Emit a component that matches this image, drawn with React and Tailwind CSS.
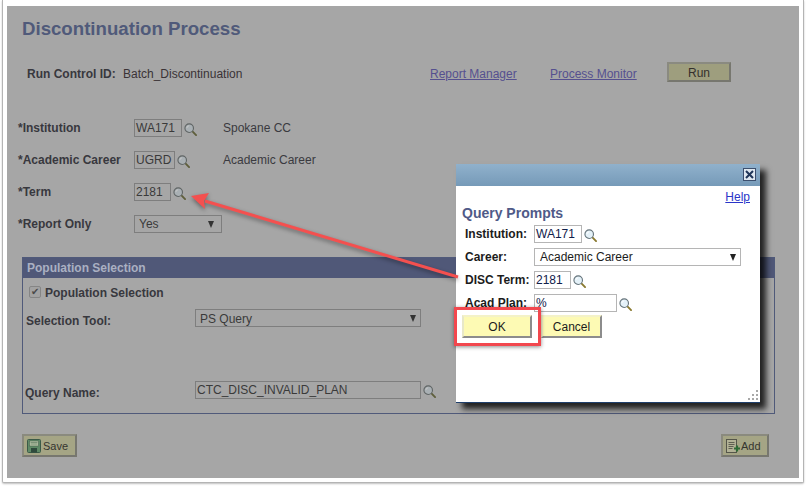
const font = { fontFamily: '"Liberation Sans", Arial, sans-serif' }

function Lens({ dim }) {
  return (
    <svg width="13" height="13" viewBox="0 0 14 14" className="mt-[3px] shrink-0">
      <path d="M8.8 8.8 L13 13" stroke={dim ? '#5f5f3c' : '#8a7a30'} strokeWidth="2" strokeLinecap="round" />
      <circle cx="5.6" cy="5.6" r="4.6" fill={dim ? '#a9b0b4' : '#e4f1f8'} stroke={dim ? '#5f6464' : '#64737a'} strokeWidth="1.2" />
      <path d="M3 5.5 A2.8 2.8 0 0 1 5.5 3" fill="none" stroke={dim ? '#c8c8c8' : '#ffffff'} strokeWidth="1" />
    </svg>
  )
}

function Field({ value, width, dim }) {
  return (
    <div className={`flex h-[18px] items-center border pl-[1px] text-[12px] shrink-0 ${dim ? 'border-[#7e7e7e] text-[#3a3a3a]' : 'border-[#b5b5b5] bg-white text-[#10204a]'}`} style={{ width }}>
      {value}
    </div>
  )
}

function FormRow({ label, children }) {
  return (
    <div className="flex h-[18px] items-center">
      <span className="w-[116px] text-[12px] font-bold text-[#38383e]">{label}</span>
      {children}
    </div>
  )
}

function PromptRow({ label, children, className }) {
  return (
    <div className={`flex h-[18px] items-center ${className}`}>
      <span className="w-[69px] text-[12px] font-bold text-[#1c1c1c]">{label}</span>
      {children}
    </div>
  )
}

function SaveIcon() {
  return (
    <svg width="14" height="14" viewBox="0 0 14 14" className="shrink-0">
      <rect x="0.5" y="0.5" width="13" height="13" rx="1" fill="#5f8a66" stroke="#3b5a48" />
      <rect x="2.5" y="2" width="9" height="5" fill="#b9c6a8" stroke="#49614f" strokeWidth="0.6" />
      <path d="M3.5 3.5h7M3.5 5h7" stroke="#5f7a60" strokeWidth="0.7" />
      <rect x="4" y="9" width="6" height="4.5" fill="#2f4a3c" />
    </svg>
  )
}

function AddIcon() {
  return (
    <svg width="15" height="14" viewBox="0 0 15 14" className="shrink-0">
      <rect x="0.5" y="0.5" width="10" height="13" fill="#b2b296" stroke="#55564a" />
      <path d="M2.5 3.5h6M2.5 5.5h6M2.5 7.5h5M2.5 9.5h4" stroke="#55564a" strokeWidth="0.9" />
      <path d="M11 6.5v6M8 9.5h6" stroke="#2f6b36" strokeWidth="2.2" />
    </svg>
  )
}

export default function App() {
  return (
    <div className="relative h-[486px] w-[806px] overflow-hidden bg-white" style={font}>
      <div className="ml-[2px] h-[483px] w-[802px] rounded-b-[2px] border-x border-b border-[#b4b4b4] bg-white pl-[4px] pt-[6px] shadow-[0_1px_2px_rgba(0,0,0,0.25)]">
        <div className="flex h-[472px] w-[792px] flex-col bg-[#a6a6a6] pl-[15px] pt-[11px]">
          <h1 className="h-[24px] text-[18.65px] font-bold leading-[24px] text-[#505a7a]">Discontinuation Process</h1>

          <div className="ml-[5px] mt-[21px] flex h-[20px] items-center text-[12px] text-[#3a3336]">
            <span className="w-[96px] pt-[3px] font-bold text-[#38383e]">Run Control ID:</span>
            <span className="w-[307px] pt-[3px]">Batch_Discontinuation</span>
            <a className="w-[120px] pt-[3px] text-[#55508f] underline">Report Manager</a>
            <a className="w-[117px] pt-[3px] text-[#55508f] underline">Process Monitor</a>
            <button className="h-[20px] w-[64px] border-2 border-t-[#8a8a80] border-l-[#8a8a80] border-r-[#77776f] border-b-[#77776f] bg-[#9e9e7e] pb-[3px] text-[12px] text-[#35302c]">Run</button>
          </div>

          <div className="ml-[-4px] mt-[37px] flex flex-col gap-[14px]">
            <FormRow label="*Institution">
              <Field value="WA171" width={48} dim />
              <span className="ml-[2px]"><Lens dim /></span>
              <span className="ml-[26px] text-[12px] text-[#3a3a40]">Spokane CC</span>
            </FormRow>
            <FormRow label="*Academic Career">
              <Field value="UGRD" width={41} dim />
              <span className="ml-[2px]"><Lens dim /></span>
              <span className="ml-[33px] text-[12px] text-[#3a3a40]">Academic Career</span>
            </FormRow>
            <FormRow label="*Term">
              <Field value="2181" width={37} dim />
              <span className="ml-[2px]"><Lens dim /></span>
            </FormRow>
            <FormRow label="*Report Only">
              <div className="flex h-[18px] w-[88px] items-center justify-between border border-[#7e7e7e] pl-[4px] pr-[7px] text-[12px] text-[#3a3a3a]">
                <span>Yes</span>
                <span className="h-0 w-0 border-x-[3.5px] border-t-[7px] border-x-transparent border-t-[#333]" />
              </div>
            </FormRow>
          </div>

          <section className="mt-[24px] h-[157px] w-[753px] border border-[#505a7a]">
            <div className="flex h-[20px] items-center bg-[#505878] pl-[4px] text-[12px] font-bold text-[#aab0c2]">Population Selection</div>
            <div className="ml-[6px] mt-[8px] flex h-[12px] items-center">
              <span className="flex h-[12px] w-[12px] items-center justify-center rounded-[2px] border border-[#858585] bg-[#a2a2a2] text-[10px] leading-none text-[#4a4a4a]">✔</span>
              <span className="ml-[4px] pt-[2px] text-[12px] font-bold text-[#38383e]">Population Selection</span>
            </div>
            <div className="ml-[3px] mt-[11px] flex h-[18px] items-center">
              <span className="w-[169px] pt-[5px] text-[12px] font-bold text-[#38383e]">Selection Tool:</span>
              <div className="flex h-[18px] w-[226px] items-center justify-between border border-[#7e7e7e] pl-[4px] pr-[4px] text-[12px] text-[#3a3a3a]">
                <span className="pt-[1px]">PS Query</span>
                <span className="h-0 w-0 border-x-[3.5px] border-t-[7px] border-x-transparent border-t-[#333]" />
              </div>
            </div>
            <div className="ml-[2px] mt-[54px] flex h-[18px] items-center">
              <span className="w-[170px] pt-[5px] text-[12px] font-bold text-[#38383e]">Query Name:</span>
              <Field value="CTC_DISC_INVALID_PLAN" width={226} dim />
              <span className="ml-[2px]"><Lens dim /></span>
            </div>
          </section>

          <div className="mt-[20px] flex w-[747px] justify-between">
            <button className="flex h-[23px] w-[55px] items-center gap-[2px] border-2 border-t-[#8a8a7e] border-l-[#8a8a7e] border-r-[#77776f] border-b-[#77776f] bg-[#a5a585] pl-[3px] pt-[1px] text-[11px] text-[#35352f]"><SaveIcon /> Save</button>
            <button className="flex h-[23px] w-[48px] items-center border-2 border-t-[#8a8a7e] border-l-[#8a8a7e] border-r-[#77776f] border-b-[#77776f] bg-[#a5a585] pl-[3px] pt-[1px] text-[11px] text-[#35352f]"><AddIcon />Add</button>
          </div>
        </div>
      </div>

      {/* popup */}
      <div className="absolute left-[456px] top-[164px] flex h-[239px] w-[304px] flex-col border-b border-[#1f3f6b] bg-white shadow-[6px_6px_6px_rgba(0,0,0,0.8)]">
        <div className="flex h-[22px] justify-end bg-gradient-to-b from-[#90b1cc] to-[#769ab8] pr-[4px] pt-[4px]">
          <span className="flex h-[13px] w-[13px] items-center justify-center border border-[#3c4f6e] bg-[#dfe8f0]">
            <svg width="9" height="9" viewBox="0 0 9 9"><path d="M1 1 L8 8 M8 1 L1 8" stroke="#1f3558" strokeWidth="2" /></svg>
          </span>
        </div>
        <a className="mr-[10px] mt-[4px] self-end text-[12px] leading-[14px] text-[#2a35c8] underline">Help</a>
        <h2 className="ml-[6px] mt-[1px] text-[14px] font-bold leading-[16px] text-[#4f5a88]">Query Prompts</h2>
        <div className="ml-[9px] mt-[4px] flex flex-col gap-[5px]">
          <PromptRow label="Institution:">
            <Field value="WA171" width={48} />
            <span className="ml-[2px]"><Lens /></span>
          </PromptRow>
          <PromptRow label="Career:">
            <div className="flex h-[18px] w-[207px] items-center justify-between border border-[#b5b5b5] pl-[5px] pr-[4px] text-[12px] text-[#1c1c1c]">
              <span>Academic Career</span>
              <span className="h-0 w-0 border-x-[3.5px] border-t-[7px] border-x-transparent border-t-[#222]" />
            </div>
          </PromptRow>
          <PromptRow label="DISC Term:">
            <Field value="2181" width={37} />
            <span className="ml-[2px]"><Lens /></span>
          </PromptRow>
          <PromptRow label="Acad Plan:">
            <Field value="%" width={83} />
            <span className="ml-[2px]"><Lens /></span>
          </PromptRow>
        </div>
        <div className="ml-[6px] mt-[3px] flex gap-[9px]">
          <button className="h-[23px] w-[70px] border-2 border-t-[#f4f2c8] border-l-[#e8e8c8] border-r-[#8c8c8c] border-b-[#8c8c8c] bg-[#fdfab4] text-[12px] text-[#1c1c1c]">OK</button>
          <button className="h-[23px] w-[61px] border-2 border-t-[#f4f2c8] border-l-[#f4f2c8] border-r-[#8c8c8c] border-b-[#8c8c8c] bg-[#fdfab4] text-[12px] text-[#1c1c1c]">Cancel</button>
        </div>
        <svg width="12" height="12" viewBox="0 0 12 12" className="absolute bottom-[1px] right-[1px]">
          <path d="M9 1h2v2H9zM5 5h2v2H5zM9 5h2v2H9zM1 9h2v2H1zM5 9h2v2H5zM9 9h2v2H9z" fill="#a8a8a8" />
        </svg>
      </div>

      {/* callouts */}
      <div className="absolute left-[454px] top-[307px] h-[39px] w-[87px] border-[3px] border-[#f2474e] shadow-[0_1px_4px_rgba(0,0,0,0.45)]" />
      <svg width="806" height="486" className="absolute left-0 top-0" style={{ filter: 'drop-shadow(0 2px 2px rgba(0,0,0,0.4))' }}>
        <path d="M458 277 L205 201" stroke="#f4504f" strokeWidth="3" />
        <path d="M191 196 L209 193 L204 201 L205 209 Z" fill="#f4504f" />
      </svg>
    </div>
  )
}
